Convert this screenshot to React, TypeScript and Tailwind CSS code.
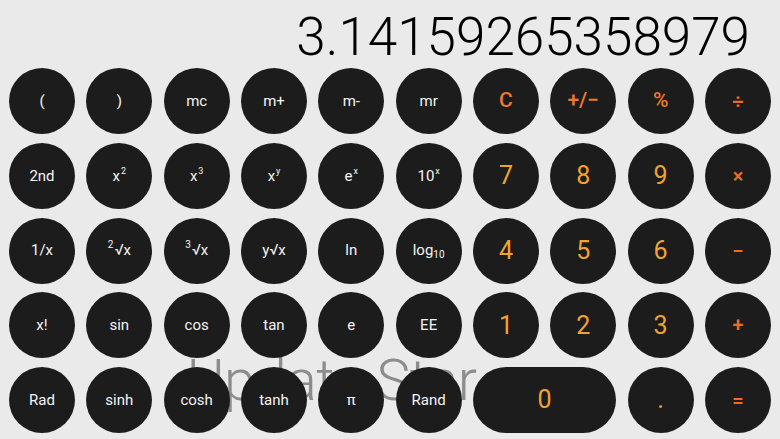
import React from "react";

type Key = {
  label: React.ReactNode;
  kind?: "fn" | "digit" | "op" | "top";
  wide?: boolean;
};

const sup = (base: string, s: string) => (
  <span>
    {base}
    <sup className="text-[9px] relative -top-[7px] ml-[1px]">{s}</sup>
  </span>
);

const root = (s: string) => (
  <span>
    <sup className="text-[10px] relative -top-[7px] mr-[1px]">{s}</sup>√x
  </span>
);

const keys: Key[] = [
  { label: "(" },
  { label: ")" },
  { label: "mc" },
  { label: "m+" },
  { label: "m-" },
  { label: "mr" },
  { label: "C", kind: "top" },
  { label: "+/−", kind: "top" },
  { label: "%", kind: "top" },
  { label: "÷", kind: "op" },
  { label: "2nd" },
  { label: sup("x", "2") },
  { label: sup("x", "3") },
  { label: sup("x", "y") },
  { label: sup("e", "x") },
  { label: sup("10", "x") },
  { label: "7", kind: "digit" },
  { label: "8", kind: "digit" },
  { label: "9", kind: "digit" },
  { label: "×", kind: "op" },
  { label: "1/x" },
  { label: root("2") },
  { label: root("3") },
  { label: "y√x" },
  { label: "ln" },
  {
    label: (
      <span>
        log<sub className="text-[10px] relative top-[3px]">10</sub>
      </span>
    ),
  },
  { label: "4", kind: "digit" },
  { label: "5", kind: "digit" },
  { label: "6", kind: "digit" },
  { label: "−", kind: "op" },
  { label: "x!" },
  { label: "sin" },
  { label: "cos" },
  { label: "tan" },
  { label: "e" },
  { label: "EE" },
  { label: "1", kind: "digit" },
  { label: "2", kind: "digit" },
  { label: "3", kind: "digit" },
  { label: "+", kind: "op" },
  { label: "Rad" },
  { label: "sinh" },
  { label: "cosh" },
  { label: "tanh" },
  { label: "π" },
  { label: "Rand" },
  { label: "0", kind: "digit", wide: true },
  { label: ".", kind: "digit" },
  { label: "=", kind: "op" },
];

function KeyButton({ k }: { k: Key }) {
  const kind = k.kind ?? "fn";
  const textCls =
    kind === "digit"
      ? "text-[25px] text-[#f2a32e] font-normal"
      : kind === "top"
      ? "text-[21px] text-[#f0782a] font-medium"
      : kind === "op"
      ? "text-[20px] text-[#ee6a27] font-semibold"
      : "text-[15px] text-[#f4f4f4] font-normal";
  return (
    <div
      className={`${k.wide ? "col-span-2" : ""} h-[66px] rounded-full bg-[#1c1c1c] flex items-center justify-center relative z-10 ${textCls}`}
    >
      {k.label}
    </div>
  );
}

export default function App() {
  return (
    <div
      className="relative w-[780px] h-[439px] bg-[#eaeaea] overflow-hidden"
      style={{ fontFamily: "Roboto, 'Noto Sans', sans-serif" }}
    >
      <div className="absolute left-[187px] top-[352px] text-[57px] leading-[57px] font-light text-[#8c8c8c] z-0 tracking-[-0.5px]">
        Update Star
      </div>
      <div className="h-[68px] pt-[11px] pr-[30px] text-right">
        <div className="text-[53px] leading-[52px] font-light text-black">
          3.14159265358979
        </div>
      </div>
      <div className="grid grid-cols-[repeat(10,66px)] auto-rows-[66px] justify-between gap-y-[8.75px] px-[9px]">
        {keys.map((k, i) => (
          <KeyButton key={i} k={k} />
        ))}
      </div>
    </div>
  );
}
